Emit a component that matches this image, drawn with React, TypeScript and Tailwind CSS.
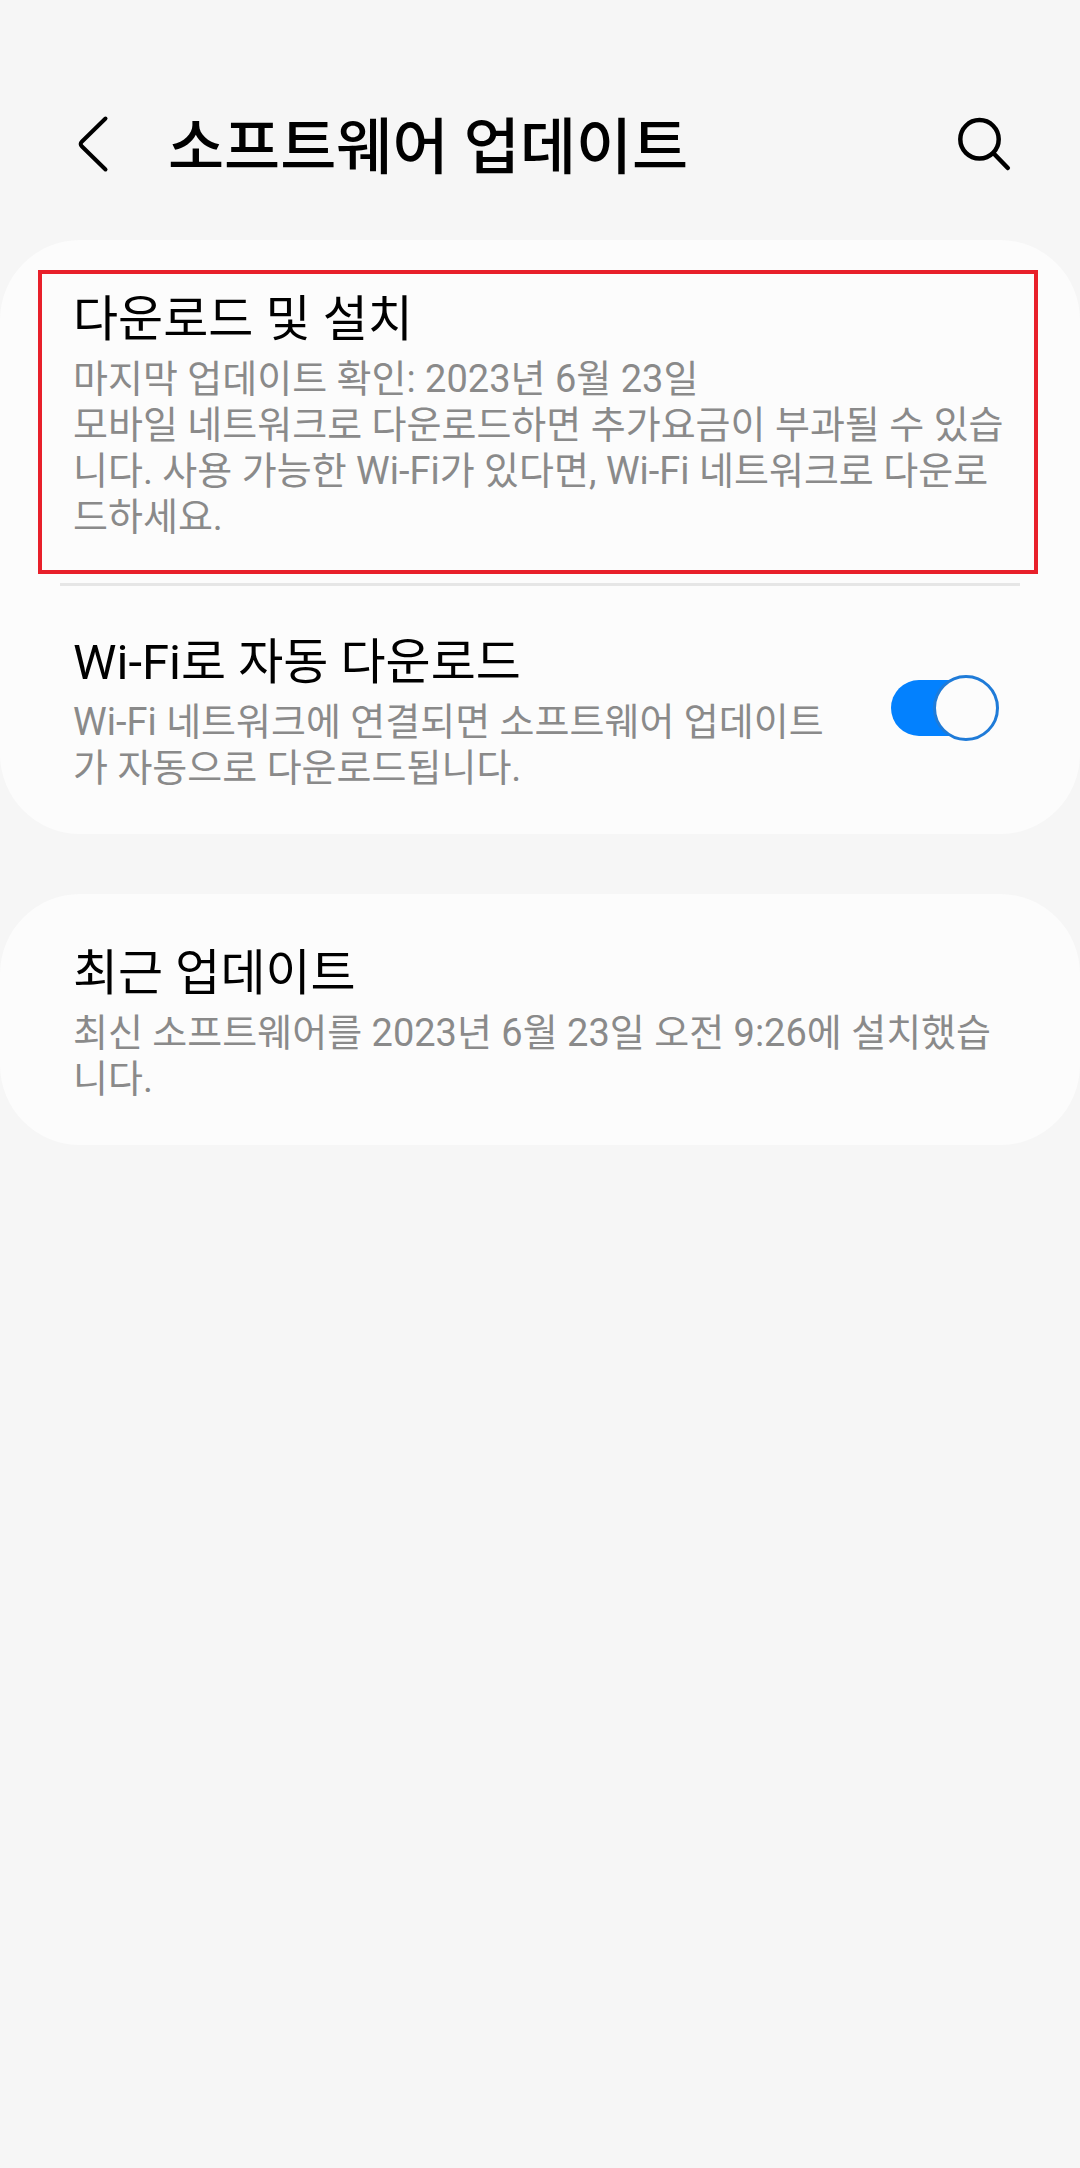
import React, { useState } from 'react';

interface RowTextProps {
    title: string;
    lines: string[];
}

function RowText({ title, lines }: RowTextProps) {
    return (
        <>
            <span className="block text-[49px] leading-[68px] text-black">{title}</span>
            <span className="mt-[2px] block break-all text-[38px] leading-[46px] text-[#8a8a8a]">
                {lines.map((line) => (
                    <span key={line} className="block">{line}</span>
                ))}
            </span>
        </>
    );
}

export default function App() {
    const [autoDownload, setAutoDownload] = useState(true);

    return (
        <div
            lang="ko"
            className="min-h-screen bg-[#f6f6f6] font-[Roboto,'Noto_Sans_CJK_KR',sans-serif]"
        >
            <header className="flex items-center pt-24 pr-16 pb-12 pl-[72px]">
                <button type="button" aria-label="뒤로" className="flex h-24 w-11 items-center">
                    <svg width="44" height="64" viewBox="0 0 44 64" fill="none" stroke="#000" strokeWidth="4" strokeLinecap="round" strokeLinejoin="round">
                        <path d="M33.5 6.5 L10 29.5 Q7.5 32 10 34.5 L33.5 57.5" />
                    </svg>
                </button>
                <h1 className="ml-[52px] flex-1 pt-2 text-[61px] leading-[72px] font-medium text-black">소프트웨어 업데이트</h1>
                <button type="button" aria-label="검색" className="flex h-24 w-16 items-center justify-center">
                    <svg width="64" height="64" viewBox="0 0 64 64" fill="none" stroke="#000" strokeWidth="4.5" strokeLinecap="round">
                        <circle cx="27.5" cy="27.3" r="19.2" />
                        <path d="M41.5 41.3 L55.8 56" />
                    </svg>
                </button>
            </header>

            <main className="flex flex-col gap-[60px]">
                <section className="flex flex-col rounded-[80px] bg-[#fcfcfc] pt-[30px]">
                    {/* Highlighted entry */}
                    <button type="button" className="mr-[42px] ml-[38px] border-4 border-[#e8202a] pt-3 pr-6 pb-[30px] pl-[31px] text-left">
                        <RowText
                            title="다운로드 및 설치"
                            lines={[
                                '마지막 업데이트 확인: 2023년 6월 23일',
                                '모바일 네트워크로 다운로드하면 추가요금이 부과될 수 있습니다. 사용 가능한 Wi-Fi가 있다면, Wi-Fi 네트워크로 다운로드하세요.',
                            ]}
                        />
                    </button>
                    <hr className="mx-[60px] mt-[9px] border-t-[3px] border-[#e6e6e6]" />

                    <label className="flex items-center gap-12 pt-[43px] pr-[81px] pb-[43px] pl-[73px]">
                        <span className="flex-1">
                            <RowText
                                title="Wi-Fi로 자동 다운로드"
                                lines={['Wi-Fi 네트워크에 연결되면 소프트웨어 업데이트가 자동으로 다운로드됩니다.']}
                            />
                        </span>
                        <span className="relative mb-1 flex h-[66px] w-[108px] items-center">
                            <input
                                type="checkbox"
                                role="switch"
                                checked={autoDownload}
                                onChange={(e) => setAutoDownload(e.target.checked)}
                                className="peer h-14 w-[104px] appearance-none rounded-full bg-[#b0b0b0] checked:bg-[#0381fe]"
                            />
                            <span className="pointer-events-none absolute top-0 left-0 size-[66px] rounded-full border-[3px] border-[#909090] bg-[#fcfcfc] peer-checked:right-0 peer-checked:left-auto peer-checked:border-[#1f7bd8]" />
                        </span>
                    </label>
                </section>

                <section className="flex flex-col rounded-[80px] bg-[#fcfcfc]">
                    <button type="button" className="pt-[46px] pr-[60px] pb-[43px] pl-[73px] text-left">
                        <RowText
                            title="최근 업데이트"
                            lines={['최신 소프트웨어를 2023년 6월 23일 오전 9:26에 설치했습니다.']}
                        />
                    </button>
                </section>
            </main>
        </div>
    );
}
